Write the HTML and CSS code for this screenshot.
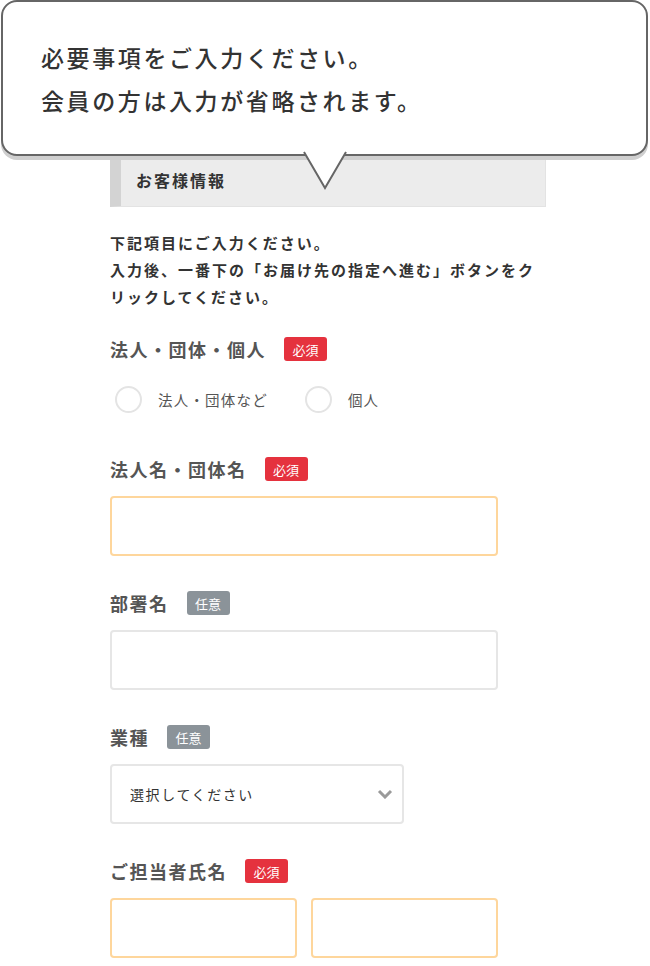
FILE: index.html
```html
<!DOCTYPE html>
<html lang="ja">
<head>
    <meta charset="UTF-8">
    <meta name="viewport" content="width=device-width, initial-scale=1.0">
    <title>お客様情報</title>
    <link rel="stylesheet" href="styles.css">
</head>
<body>
    <div class="page">
        <div class="bubble">
            <p>必要事項をご入力ください。</p>
            <p>会員の方は入力が省略されます。</p>
        </div>
        <svg class="bubble-tail" width="44" height="40" viewBox="0 0 44 40">
            <polygon points="0,0 22,37 44,0" fill="#fff"/>
            <polyline points="1,1 22,37 43,1" fill="none" stroke="#666" stroke-width="2"/>
        </svg>

        <div class="form">
            <h2 class="section-title">お客様情報</h2>
            <p class="intro">下記項目にご入力ください。<br>入力後、一番下の「お届け先の指定へ進む」ボタンをクリックしてください。</p>

            <div class="field">
                <div class="field-label">法人・団体・個人<span class="badge required">必須</span></div>
                <div class="radios">
                    <label class="radio"><input type="radio" name="type"><span>法人・団体など</span></label>
                    <label class="radio"><input type="radio" name="type"><span>個人</span></label>
                </div>
            </div>

            <div class="field">
                <div class="field-label">法人名・団体名<span class="badge required">必須</span></div>
                <input class="text-input is-required" type="text">
            </div>

            <div class="field">
                <div class="field-label">部署名<span class="badge optional">任意</span></div>
                <input class="text-input" type="text">
            </div>

            <div class="field">
                <div class="field-label">業種<span class="badge optional">任意</span></div>
                <div class="select-wrap">
                    <select class="select">
                        <option>選択してください</option>
                    </select>
                    <svg class="chevron" width="16" height="10" viewBox="0 0 16 10">
                        <polyline points="2,2 8,8 14,2" fill="none" stroke="#9a9a9a" stroke-width="3"/>
                    </svg>
                </div>
            </div>

            <div class="field">
                <div class="field-label">ご担当者氏名<span class="badge required">必須</span></div>
                <div class="name-row">
                    <input class="text-input is-required" type="text">
                    <input class="text-input is-required" type="text">
                </div>
            </div>
        </div>
    </div>
</body>
</html>
```

FILE: styles.css
```css
body {
    margin: 0;
    padding: 0;
    background-color: #fff;
    font-family: "Noto Sans CJK JP", "Noto Sans", sans-serif;
    color: #333;
}

.page {
    position: relative;
    width: 650px;
    height: 966px;
    overflow: hidden;
}

/* speech bubble over the form */
.bubble {
    position: absolute;
    top: 0;
    left: 1px;
    width: 643px;
    height: 152px;
    border: 2px solid #666;
    border-radius: 16px;
    background-color: #fff;
    box-shadow: 0 4px 0 #cfcfcf;
    z-index: 2;
}

.bubble p {
    margin: 0;
    padding-left: 38px;
    font-size: 23px;
    font-weight: 500;
    letter-spacing: 2.6px;
    line-height: 43px;
    color: #333;
}

.bubble p:first-child {
    margin-top: 34px;
}

.bubble-tail {
    position: absolute;
    top: 151px;
    left: 303px;
    z-index: 3;
}

.form {
    width: 436px;
    margin-left: 110px;
    padding-top: 150px;
}

.section-title {
    margin: 0;
    height: 57px;
    box-sizing: border-box;
    padding: 19px 0 0 15px;
    font-size: 16px;
    line-height: 22px;
    font-weight: bold;
    letter-spacing: 2px;
    color: #333;
    background-color: #ececec;
    border-left: 11px solid #d3d3d3;
    border-right: 1px solid #e3e3e3;
    border-bottom: 1px solid #e3e3e3;
}

.intro {
    margin: 22px 0 0;
    font-size: 15px;
    line-height: 27px;
    font-weight: bold;
    letter-spacing: 2px;
    color: #333;
}

.field {
    margin-top: 35px;
}

.intro + .field {
    margin-top: 27px;
}

.field-label {
    display: flex;
    align-items: center;
    height: 24px;
    margin-bottom: 15px;
    font-size: 18px;
    font-weight: bold;
    letter-spacing: 1.5px;
    color: #555;
}

.badge {
    display: inline-flex;
    align-items: center;
    justify-content: center;
    width: 43px;
    height: 24px;
    margin-left: 18px;
    border-radius: 3px;
    font-size: 13px;
    font-weight: normal;
    letter-spacing: 0;
    color: #fff;
}

.required {
    background-color: #e5323e;
}

.optional {
    background-color: #8b9399;
}

.radios {
    display: flex;
    align-items: center;
    padding: 10px 0 9px 5px;
}

.radio {
    display: flex;
    align-items: center;
    margin-right: 37px;
    font-size: 14.5px;
    letter-spacing: 1.2px;
    color: #555;
}

.radio input {
    appearance: none;
    width: 27px;
    height: 27px;
    margin: 0 16px 0 0;
    border: 2px solid #e4e4e4;
    border-radius: 50%;
    background-color: #fff;
}

.text-input {
    display: block;
    width: 388px;
    height: 60px;
    box-sizing: border-box;
    margin: 0;
    border: 2px solid #e6e6e6;
    border-radius: 4px;
    background-color: #fff;
    outline: none;
}

.is-required {
    border-color: #fed69c;
}

.select-wrap {
    position: relative;
    width: 294px;
}

.select {
    appearance: none;
    display: block;
    width: 294px;
    height: 60px;
    box-sizing: border-box;
    padding: 0 0 0 18px;
    border: 2px solid #e6e6e6;
    border-radius: 4px;
    background-color: #fff;
    font-family: "Noto Sans CJK JP", "Noto Sans", sans-serif;
    font-size: 14px;
    letter-spacing: 1.6px;
    color: #333;
}

.chevron {
    position: absolute;
    top: 25px;
    right: 11px;
}

.name-row {
    display: flex;
    gap: 14px;
    width: 388px;
}

.name-row .text-input {
    width: 187px;
}
```
